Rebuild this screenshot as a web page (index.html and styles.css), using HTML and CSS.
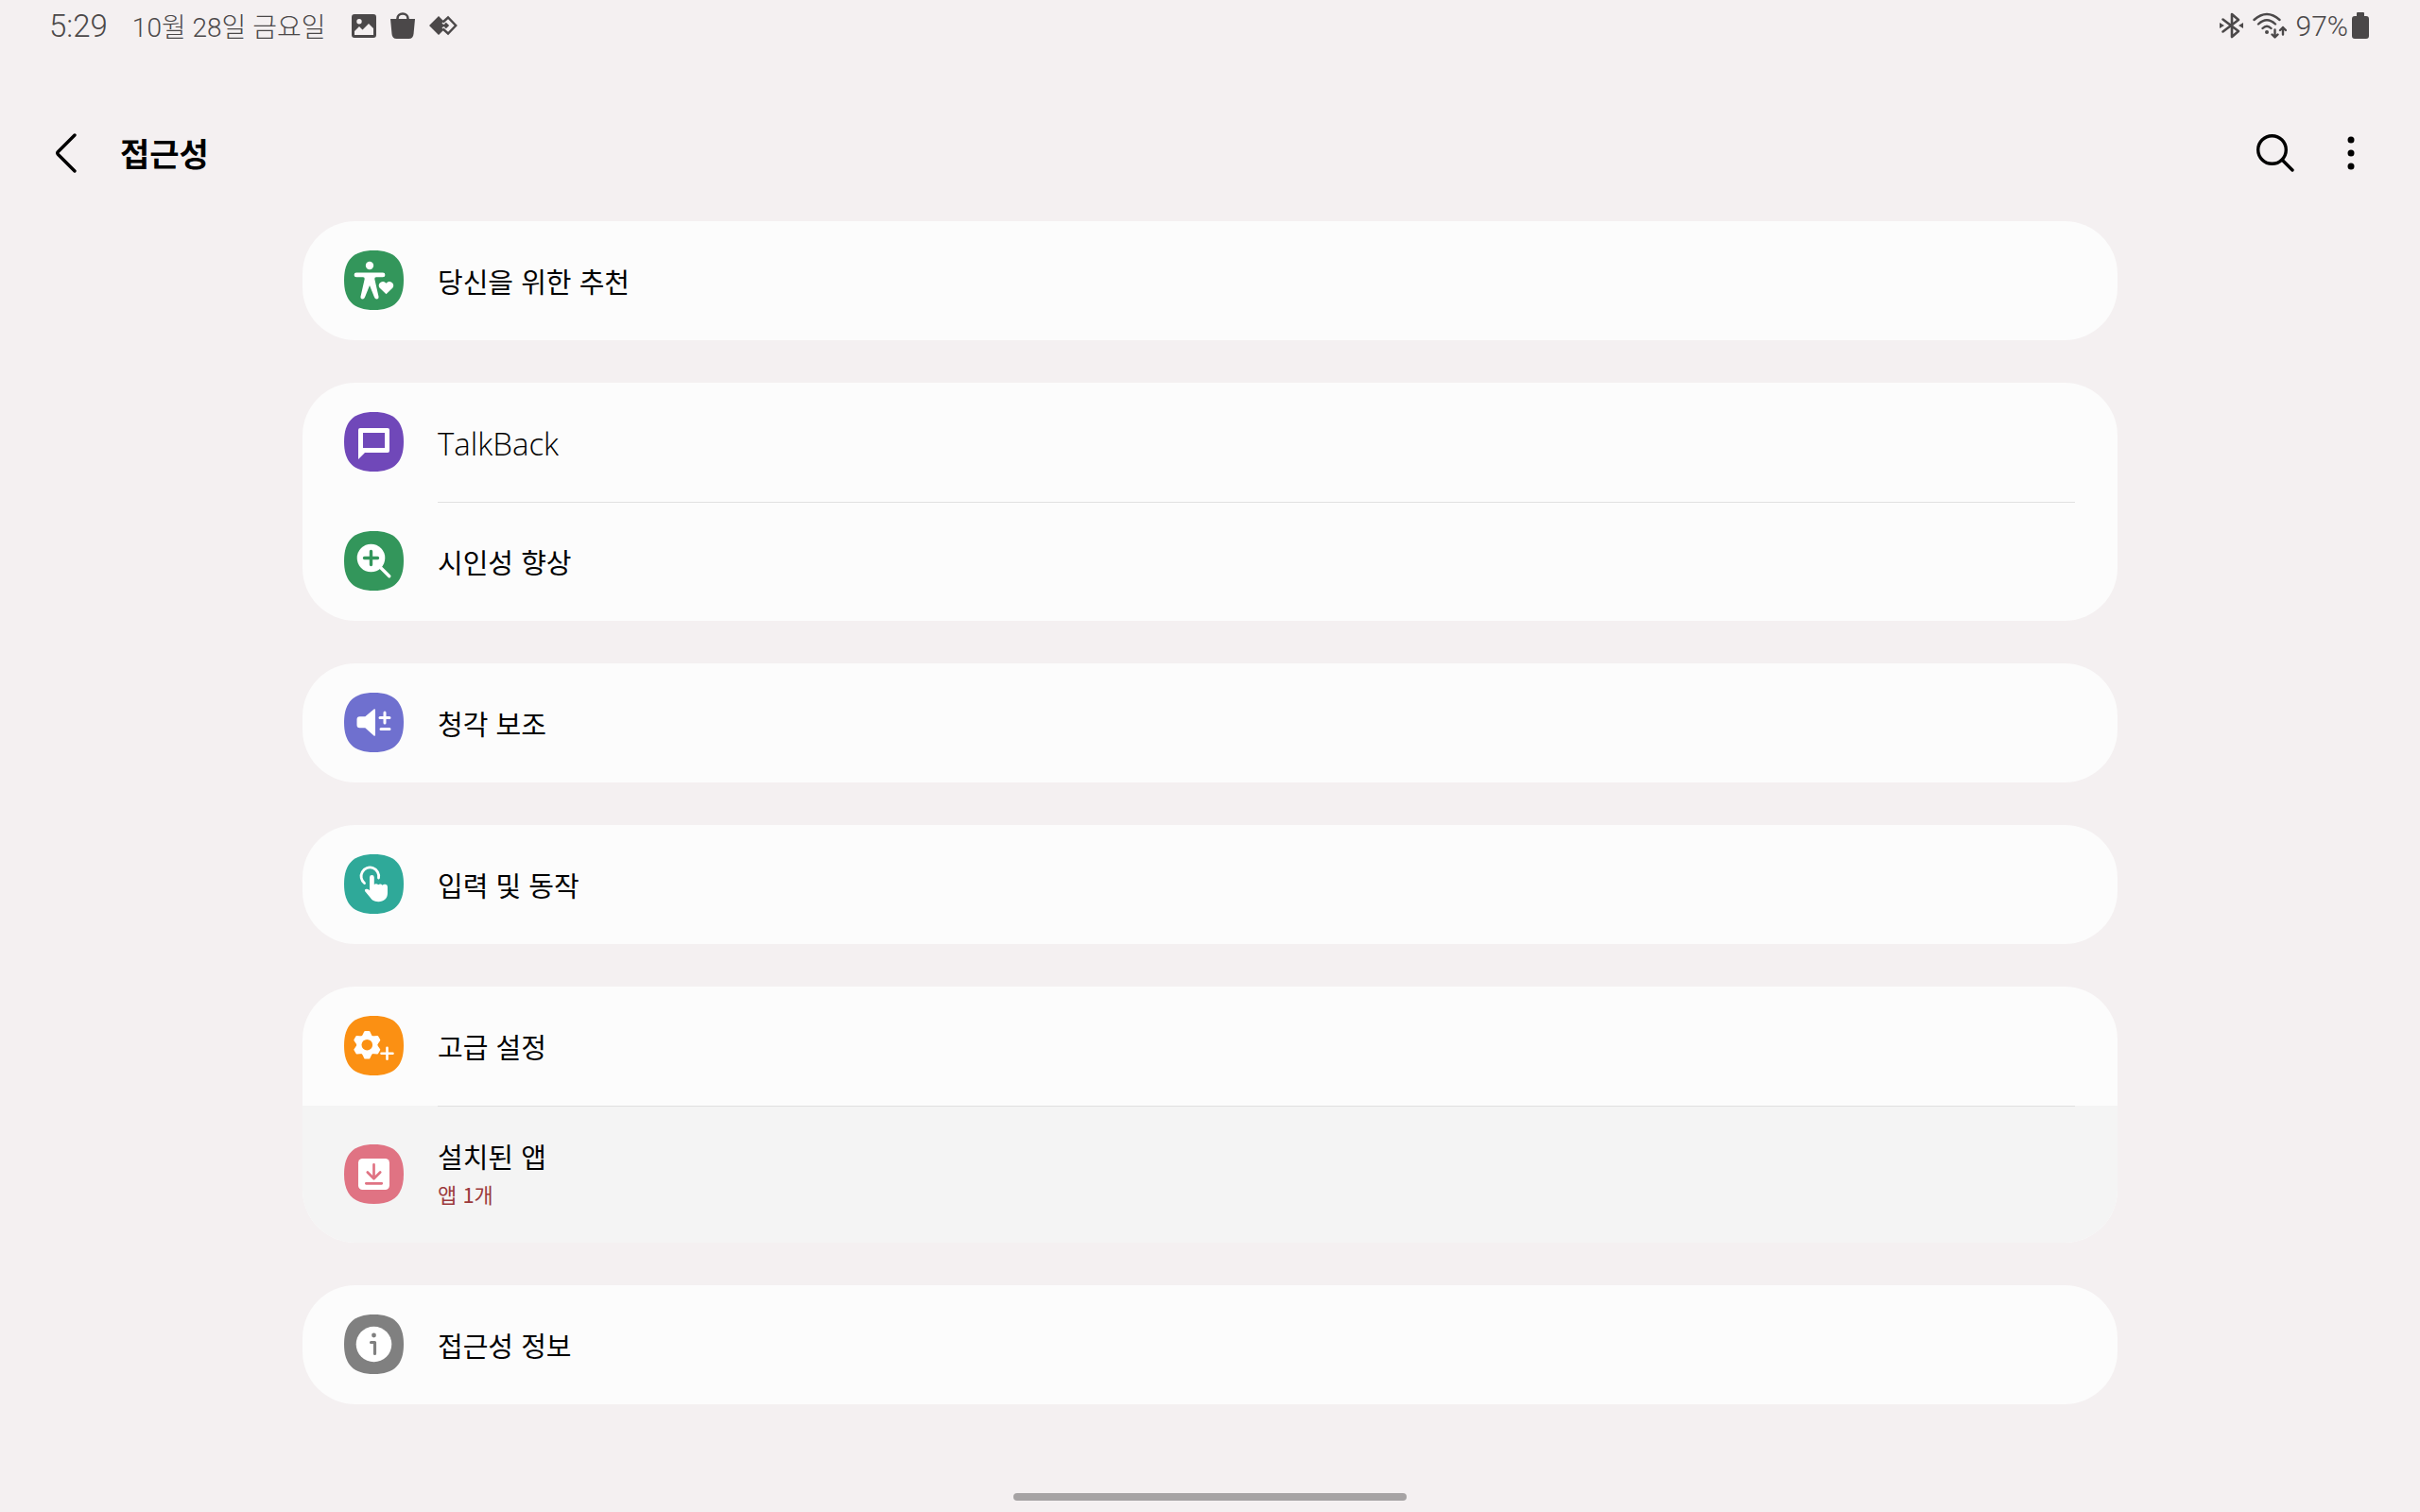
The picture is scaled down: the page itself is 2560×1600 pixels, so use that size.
FILE: index.html
```html
<!DOCTYPE html>
<html lang="ko">
<head>
  <meta charset="utf-8">
  <meta name="viewport" content="width=device-width, initial-scale=1">
  <title>접근성</title>
  <link rel="stylesheet" href="styles.css">
</head>
<body>
  <div class="status-bar">
    <div class="status-left">
      <span class="clock">5:29</span>
      <span class="date">10월 28일 금요일</span>
      <div class="notifications">
        <svg width="26" height="28" viewBox="0 0 26 28">
          <path fill="currentColor" fill-rule="evenodd" d="M3 2h20a3 3 0 0 1 3 3v19a3 3 0 0 1-3 3H3a3 3 0 0 1-3-3V5a3 3 0 0 1 3-3zM8 7a2.700 2.700 0 1 0 0 5.400A2.700 2.700 0 0 0 8 7zM3 20v4h20v-7l-5-5-6.500 6.500L8 15z"/>
        </svg>
        <svg width="26" height="28" viewBox="0 0 26 28">
          <path fill="currentColor" d="M0 7h26l-1.500 16q-.5 5-5 5h-13q-4.500 0-5-5z"/>
          <path fill="none" stroke="currentColor" stroke-width="2.600" d="M7.500 8V6.500a5.500 5 0 0 1 11 0V8"/>
        </svg>
        <svg width="30" height="28" viewBox="0 0 30 28">
          <path fill="currentColor" d="M10 4l5.500 5.500-2 2 2.500 2.500-2.500 2.500 2 2L10 24 0 14z"/>
          <path fill="none" stroke="currentColor" stroke-width="2.400" d="M14.500 10.500L20 5.500l8.200 8.500-8.200 8.500-5.500-5M14 14h5M17 11.500l2.500 2.500-2.500 2.500"/>
        </svg>
      </div>
    </div>
    <div class="status-right">
      <svg width="25" height="28" viewBox="0 0 25 28">
        <path fill="none" stroke="currentColor" stroke-width="2.600" stroke-linejoin="round" stroke-linecap="round" d="M3.500 7.500L20 20l-7 6V2l7 6L3.500 20.500"/>
        <path fill="currentColor" d="M0 11l5 3-5 3zM25 11l-5 3 5 3z"/>
      </svg>
      <svg width="36" height="28" viewBox="0 0 36 28">
        <g fill="none" stroke="currentColor" stroke-width="2.400" stroke-linecap="round">
          <path d="M1.500 8q13.500-12 27 0M6 12.500q9-8.500 18 0M10.500 17q4.500-4.500 9 0"/>
          <path stroke-linejoin="round" d="M23.500 18.500v7.500M20.500 23.500l3 3 3-3M32 23.500v-7.500M29 19l3-3 3 3"/>
        </g>
        <circle cx="15" cy="21" r="2" fill="currentColor"/>
      </svg>
      <span class="battery-level">97%</span>
      <svg class="battery" width="18" height="28" viewBox="0 0 18 28">
        <path fill="currentColor" d="M5 4V1q0-1 1-1h6q1 0 1 1v3h2q3 0 3 3v18q0 3-3 3H3q-3 0-3-3V7q0-3 3-3z"/>
      </svg>
    </div>
  </div>

  <header class="app-bar">
    <button class="icon-button back" aria-label="뒤로">
      <svg width="22" height="42" viewBox="0 0 22 42">
        <path d="M20 2L2.500 19.500q-1.500 1.500 0 3L20 40"/>
      </svg>
    </button>
    <h1>접근성</h1>
    <button class="icon-button search" aria-label="검색">
      <svg width="40" height="40" viewBox="0 0 40 40">
        <circle cx="16.500" cy="16.500" r="14.800"/>
        <path d="M27.500 27.500L38 38"/>
      </svg>
    </button>
    <button class="icon-button more" aria-label="더보기">
      <svg width="8" height="36" viewBox="0 0 8 36">
        <circle cx="4" cy="4" r="3.500"/>
        <circle cx="4" cy="18" r="3.500"/>
        <circle cx="4" cy="32" r="3.500"/>
      </svg>
    </button>
  </header>

  <!-- rounded-square background shared by the row icons -->
  <svg class="defs" width="0" height="0">
    <symbol id="tile" viewBox="0 0 63 63">
      <path fill="currentColor" d="M31.500 0C53 0 63 10 63 31.500S53 63 31.500 63 0 53 0 31.500 10 0 31.500 0z"/>
    </symbol>
  </svg>

  <main class="settings">
    <ul class="card">
      <li>
        <a class="row" href="#recommended">
          <svg class="row-icon green" viewBox="0 0 63 63">
            <use href="#tile"/>
            <g fill="#fff">
              <circle cx="27" cy="16" r="4.200"/>
              <path d="M13 23.500h28a2.400 2.400 0 0 1 0 4.800h-7q-2 0-1.700 2l4.200 18.500q.4 2.500-2 2.700-1.800 0-2.500-2L27 37l-5 12.500q-.7 2-2.500 2-2.400-.2-2-2.700L21.700 30.300q.3-2-1.700-2h-7a2.400 2.400 0 0 1 0-4.800z"/>
              <path d="M44.500 46.300l-6.500-6.200c-4-4.500 2.500-10 6.500-5.400 4-4.600 10.500.9 6.500 5.400z"/>
            </g>
          </svg>
          <span class="row-title">당신을 위한 추천</span>
        </a>
      </li>
    </ul>

    <ul class="card">
      <li>
        <a class="row" href="#talkback">
          <svg class="row-icon purple" viewBox="0 0 63 63">
            <use href="#tile"/>
            <path fill="#fff" fill-rule="evenodd" d="M17 17h29q2 0 2 2v22q0 2-2 2H22l-7 7V19q0-2 2-2zM20 22v16h23V22z"/>
          </svg>
          <span class="row-title latin">TalkBack</span>
        </a>
      </li>
      <li>
        <a class="row" href="#visibility">
          <svg class="row-icon green" viewBox="0 0 63 63">
            <use href="#tile"/>
            <circle cx="28.500" cy="28.500" r="14.800" fill="#fff"/>
            <path fill="none" stroke="#fff" stroke-width="3.400" stroke-linecap="round" d="M37 37l10.800 10.800"/>
            <path fill="none" stroke="currentColor" stroke-width="3.400" stroke-linecap="round" d="M21.500 28.500h14M28.500 21.500v14"/>
          </svg>
          <span class="row-title">시인성 향상</span>
        </a>
      </li>
    </ul>

    <ul class="card">
      <li>
        <a class="row" href="#hearing">
          <svg class="row-icon violet" viewBox="0 0 63 63">
            <use href="#tile"/>
            <path fill="#fff" d="M16.500 25.300h5.800L31.500 17.500q1.500-1 1.500 1v26q0 2-1.500 1l-9.200-8.200h-5.800q-3 0-3-3v-6q0-3 3-3z"/>
            <path fill="none" stroke="#fff" stroke-width="3" stroke-linecap="round" d="M38 26.500h10M43 21v11M39 38.500h9"/>
          </svg>
          <span class="row-title">청각 보조</span>
        </a>
      </li>
    </ul>

    <ul class="card">
      <li>
        <a class="row" href="#interaction">
          <svg class="row-icon teal" viewBox="0 0 63 63">
            <use href="#tile"/>
            <path fill="none" stroke="#fff" stroke-width="2.800" stroke-linecap="round" d="M21.500 30.500A9.300 9.300 0 1 1 36.500 25"/>
            <path fill="#fff" d="M27 24.500a2.400 2.400 0 0 1 4.800 0V32q2.200-1.600 4.400.3 2.200-1.800 4.400.4 1-1.200 3-.9 2.400.2 2.400 2.700V41c0 6-4 9.200-9.700 9.200-5 0-7.300-2.200-9.300-5.200l-5-6q-.8-2 1.200-2.200 2-.2 3.800 1.400z"/>
          </svg>
          <span class="row-title">입력 및 동작</span>
        </a>
      </li>
    </ul>

    <ul class="card">
      <li>
        <a class="row" href="#advanced">
          <svg class="row-icon orange" viewBox="0 0 63 63">
            <use href="#tile"/>
            <g fill="#fff" transform="translate(24.300 30.700)">
              <circle r="11"/>
              <path id="tooth" d="M-5.500-9L-3-14.200q.3-.6 1-.6h4q.7 0 1 .6L5.500-9z"/>
              <use href="#tooth" transform="rotate(60)"/>
              <use href="#tooth" transform="rotate(120)"/>
              <use href="#tooth" transform="rotate(180)"/>
              <use href="#tooth" transform="rotate(240)"/>
              <use href="#tooth" transform="rotate(300)"/>
            </g>
            <circle cx="24.300" cy="30.700" r="5.800" fill="currentColor"/>
            <path fill="none" stroke="#fff" stroke-width="2.600" stroke-linecap="round" d="M39.500 39.800h12M45.500 33.800v12"/>
          </svg>
          <span class="row-title">고급 설정</span>
        </a>
      </li>
      <li>
        <a class="row row-tall selected" href="#installed">
          <svg class="row-icon pink" viewBox="0 0 63 63">
            <use href="#tile"/>
            <rect x="15" y="15" width="33" height="33" rx="4.500" fill="#fff"/>
            <path fill="none" stroke="currentColor" stroke-width="2.700" stroke-linecap="round" stroke-linejoin="round" d="M31.500 21.300V36M24.800 29.500l6.700 6.700 6.700-6.700M23.300 41.300h16.500"/>
          </svg>
          <span class="row-text">
            <span class="row-title">설치된 앱</span>
            <span class="row-summary">앱 1개</span>
          </span>
        </a>
      </li>
    </ul>

    <ul class="card">
      <li>
        <a class="row" href="#about">
          <svg class="row-icon gray" viewBox="0 0 63 63">
            <use href="#tile"/>
            <circle cx="31.500" cy="31.500" r="18.800" fill="#fff"/>
            <circle cx="31.500" cy="22" r="2.400" fill="currentColor"/>
            <path fill="none" stroke="currentColor" stroke-width="3.200" stroke-linecap="round" stroke-linejoin="round" d="M28.500 29.500h4v12"/>
          </svg>
          <span class="row-title">접근성 정보</span>
        </a>
      </li>
    </ul>
  </main>

  <div class="home-handle"></div>
</body>
</html>
```
FILE: styles.css
```css
body {
  margin: 0;
  display: flex;
  flex-direction: column;
  min-height: 100vh;
  background-color: #f4f0f1;
  color: #000;
  font-family: "Noto Sans CJK KR", sans-serif;
}

h1,
ul {
  margin: 0;
  padding: 0;
}

svg {
  display: block;
  flex-shrink: 0;
}

.status-bar {
  display: flex;
  justify-content: space-between;
  height: 54px;
  padding: 0 54px 0 52px;
  color: #4b4849;
  font-family: Roboto, "Noto Sans CJK KR", sans-serif;
  font-weight: 300;
}

.status-left,
.status-right,
.notifications {
  display: flex;
  align-items: center;
}

.clock {
  margin-right: 26px;
  font-size: 33px;
}

.date {
  margin-right: 28px;
  font-size: 28px;
}

.notifications {
  gap: 15px;
}

.status-right {
  gap: 10px;
}

.battery-level {
  font-size: 30px;
}

.battery {
  margin-left: -6px;
}

.app-bar {
  display: flex;
  align-items: center;
  height: 144px;
  padding: 36px 69px 0 59px;
}

.app-bar h1 {
  flex: 1;
  margin-left: 46px;
  font-size: 34px;
  line-height: 48px;
  font-weight: 700;
}

.icon-button {
  padding: 0;
  border: none;
  background: none;
  color: inherit;
  cursor: pointer;
}

.icon-button svg {
  fill: none;
  stroke: currentColor;
  stroke-width: 3.4;
  stroke-linecap: round;
}

.more {
  margin-left: 56px;
}

.more svg {
  fill: currentColor;
  stroke: none;
}

.defs {
  position: absolute;
}

.settings {
  display: flex;
  flex-direction: column;
  gap: 45px;
  width: 75%;
  margin: 0 auto;
}

.card {
  overflow: hidden;
  border-radius: 56px;
  background-color: #fcfcfc;
  list-style: none;
}

.row {
  display: flex;
  align-items: center;
  gap: 36px;
  box-sizing: border-box;
  min-height: 126px;
  padding: 0 44px 1px;
  color: inherit;
  text-decoration: none;
}

.row-tall {
  min-height: 145px;
}

.selected {
  background-color: #f4f4f4;
}

/* divider starts at the text and stops before the card edge */
.card li + li {
  position: relative;
}

.card li + li::before {
  content: "";
  position: absolute;
  top: 0;
  left: 143px;
  right: 45px;
  height: 1px;
  background-color: #e0e0e0;
}

.row-icon {
  width: 63px;
  height: 63px;
}

.row-text {
  display: flex;
  flex-direction: column;
}

.row-title {
  font-size: 29px;
  line-height: 42px;
}

.latin {
  padding-top: 4px;
  font-family: "Open Sans", sans-serif;
  font-size: 33px;
  font-weight: 300;
}

.row-summary {
  color: #9c3a3c;
  font-size: 22px;
  line-height: 38px;
}

.green {
  color: #33965b;
}

.purple {
  color: #7048b9;
}

.violet {
  color: #6f70cf;
}

.teal {
  color: #2fa999;
}

.orange {
  color: #fb9013;
}

.pink {
  color: #e07383;
}

.gray {
  color: #808080;
}

.home-handle {
  width: 416px;
  height: 8px;
  margin: auto auto 12px;
  border-radius: 8px;
  background-color: #a6a3a4;
}
```
